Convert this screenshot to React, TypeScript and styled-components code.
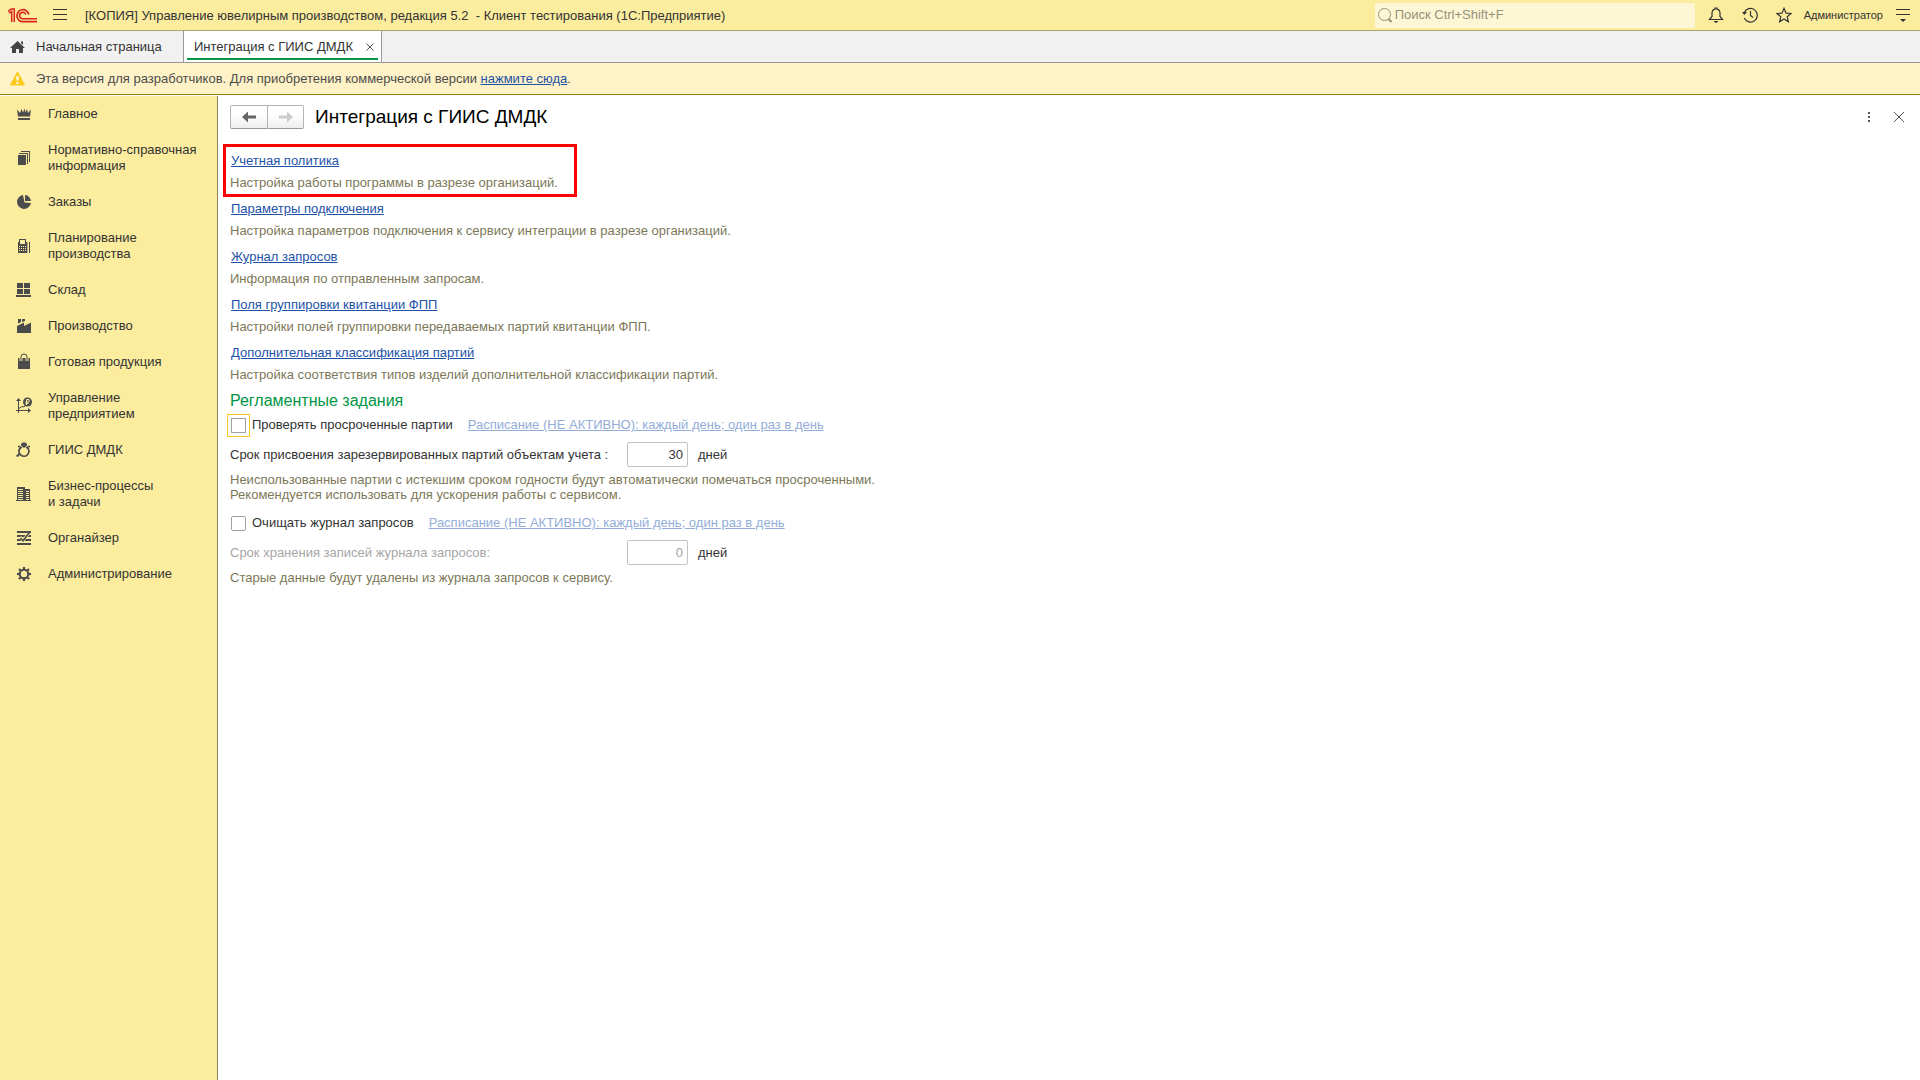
import React from 'react';
import styled, { createGlobalStyle, css } from 'styled-components';

const GlobalStyle = createGlobalStyle`
  *, *::before, *::after { box-sizing: border-box; }
  body { margin: 0; background: #fff; }
  body, button, input {
    font-family: "Liberation Sans", Arial, sans-serif;
    font-size: 13px;
    line-height: 16px;
    color: #333;
  }
`;

const Page = styled.div`
  display: flex;
  flex-direction: column;
  min-height: 100vh;
`;

const iconButton = css`
  display: flex;
  align-items: center;
  justify-content: center;
  padding: 0;
  border: 0;
  background: none;
  color: #333;
  cursor: pointer;
`;

const TitleBar = styled.header`
  display: flex;
  align-items: center;
  height: 31px;
  padding: 0 8px;
  background: #fbec9e;
  border-bottom: 1px solid #aaa46e;
`;

const MenuButton = styled.button`
  ${iconButton}
  width: 14px;
  height: 24px;
  margin: 0 18px 0 16px;
`;

const AppTitle = styled.span`
  flex: 1;
  padding-top: 2px;
  white-space: pre;
`;

const SearchBox = styled.label`
  display: flex;
  align-items: center;
  gap: 2px;
  width: 320px;
  height: 25px;
  padding: 0 2px;
  margin-right: 4px;
  border-radius: 2px;
  background: #fdf7d5;
  color: #98917a;
`;

const SearchInput = styled.input`
  flex: 1;
  min-width: 0;
  padding: 0;
  border: 0;
  outline: 0;
  background: none;
  &::placeholder { color: #98917a; opacity: 1; }
`;

const ToolButton = styled.button`
  ${iconButton}
  width: 34px;
  height: 30px;
`;

const UserName = styled.button`
  ${iconButton}
  padding: 0 3px;
  font-size: 11px;
`;

const LastTool = styled.button`
  ${iconButton}
  width: 18px;
  height: 30px;
  margin-left: 8px;
`;

const TabBar = styled.nav`
  display: flex;
  height: 32px;
  background: #f1f1f1;
  border-bottom: 1px solid #999;
`;

const HomeTab = styled.button`
  display: flex;
  align-items: center;
  gap: 11px;
  width: 183px;
  padding: 0 10px;
  border: 0;
  background: none;
  white-space: nowrap;
`;

const ActiveTab = styled.div`
  display: flex;
  align-items: center;
  justify-content: space-between;
  min-width: 199px;
  padding: 0 6px 0 10px;
  background: #fff linear-gradient(#009646, #009646) no-repeat 3px 27px / calc(100% - 6px) 2px;
  border: solid #999;
  border-width: 0 1px;
  white-space: nowrap;
`;

const CloseTab = styled.button`
  ${iconButton}
  width: 10px;
  height: 16px;
`;

const Notice = styled.div`
  display: flex;
  align-items: center;
  gap: 11px;
  height: 32px;
  padding: 0 10px;
  background: #fef2c6;
  border-bottom: 1px solid #947c1c;
  color: #4d4d4d;
`;

const Link = styled.a<{ $muted?: boolean }>`
  color: ${p => (p.$muted ? '#93add8' : '#1d52a8')};
  text-decoration: underline;
`;

const Body = styled.div`
  display: flex;
  flex: 1;
`;

const Sidebar = styled.nav`
  width: 218px;
  margin-top: 1px;
  flex-shrink: 0;
  background: #fbec9e;
  border-right: 1px solid #8f8757;
`;

const NavItem = styled.button`
  display: flex;
  align-items: center;
  gap: 16px;
  width: 100%;
  padding: 11px 0 9px 16px;
  border: 0;
  background: none;
  text-align: left;
  white-space: pre-line;
  cursor: pointer;
  &:first-child { padding-top: 10px; }
  svg {
    flex-shrink: 0;
    margin-top: -2px;
    color: #4b4b4b;
  }
`;

const Main = styled.main`
  flex: 1;
  min-width: 0;
  padding: 10px 12px;
`;

const FormHeader = styled.div`
  display: flex;
  align-items: center;
  height: 24px;
  margin-bottom: 20px;
`;

const History = styled.div`
  display: flex;
  height: 24px;
`;

const HistoryButton = styled.button<{ $side: 'left' | 'right' }>`
  ${iconButton}
  width: ${p => (p.$side === 'left' ? 38 : 36)}px;
  border: 1px solid #b4b4b4;
  border-left-width: ${p => (p.$side === 'left' ? 1 : 0)}px;
  border-bottom-color: #999;
  border-radius: ${p => (p.$side === 'left' ? '2px 0 0 2px' : '0 2px 2px 0')};
  background: linear-gradient(#fff 40%, #eee);
  color: ${p => (p.$side === 'left' ? '#666' : '#ccc')};
`;

const FormTitle = styled.h1`
  flex: 1;
  margin: 0 0 0 11px;
  font-size: 19px;
  line-height: 24px;
  font-weight: 400;
  color: #000;
`;

const FormTool = styled.button`
  ${iconButton}
  width: 30px;
  height: 24px;
  color: #555;
  &:last-child { margin-right: -6px; }
`;

const Entry = styled.section<{ $marked?: boolean }>`
  position: relative;
  width: fit-content;
  padding-bottom: 4px;
  ${p => p.$marked && css`
    &::after {
      content: "";
      position: absolute;
      inset: -5px -19px 0 -7px;
      border: 3px solid #f00;
      pointer-events: none;
    }
  `}
`;

const EntryLink = styled.div`
  padding-left: 1px;
  line-height: 24px;
`;

const Hint = styled.p`
  margin: 0;
  line-height: 20px;
  color: #7c7857;
`;

const LongHint = styled(Hint)`
  line-height: 15px;
  margin: 5px 0 9px;
`;

const GroupTitle = styled.h2`
  margin: 0;
  font-size: 16px;
  line-height: 24px;
  font-weight: 400;
  color: #009646;
`;

const CheckRow = styled.div`
  display: flex;
  align-items: center;
  gap: 15px;
  height: 24px;
`;

const CheckLabel = styled.label`
  display: flex;
  align-items: center;
  gap: 6px;
  padding-left: 1px;
`;

const Checkbox = styled.input<{ $focused?: boolean }>`
  appearance: none;
  width: 15px;
  height: 15px;
  margin: 0;
  border: 1px solid #a0a0a0;
  border-radius: ${p => (p.$focused ? 0 : 2)}px;
  background: #fff;
  outline: ${p => (p.$focused ? '1px solid #f5c924' : '0')};
  outline-offset: 3px;
  &:checked { background: #666; }
`;

const FieldRow = styled.div`
  display: flex;
  align-items: center;
  height: 25px;
  margin-top: 5px;
`;

const FieldLabel = styled.label<{ $muted?: boolean }>`
  width: 397px;
  color: ${p => (p.$muted ? '#a6a6a6' : '#333')};
`;

const NumberInput = styled.input`
  width: 61px;
  height: 25px;
  margin-right: 10px;
  padding: 0 4px;
  border: 1px solid #c3c3c3;
  border-radius: 2px;
  background: #fff;
  text-align: right;
  &:disabled { color: #a0a0a0; }
`;

const ico = { width: 16, height: 16, viewBox: '0 0 16 16', fill: 'currentColor', 'aria-hidden': true } as const;
const line = { ...ico, fill: 'none', stroke: 'currentColor' } as const;

const Crown = () => <svg {...ico}><path d="M1 4.500L4 8l1.500-4L7 7.500l1.500-4L9.500 7.500 11 4l1 4 3-3.500-1 7H2zM2 13h12v2H2z" /></svg>;
const Docs = () => <svg {...ico}><path d="M2 6h8v10H2zM3 4h9v11h-1V5H3zM5 2h9v11h-1V3H5z" /></svg>;
const Pie = () => <svg {...ico}><path d="M7 2a7 7 0 1 0 8 8L8.500 9.500zM9 2a6.500 6.500 0 0 1 6 6H9z" /></svg>;
const Calc = () => (
  <svg {...ico} shapeRendering="crispEdges">
    <path fillRule="evenodd" d="M3 2h7v3h1v11H2V5h1zM4 3v4h5V3zM3 9v1h1V9zM5 9v1h1V9zM7 9v1h1V9zM9 9v1h1V9zM3 11v1h1v-1zM5 11v1h1v-1zM7 11v1h1v-1zM9 11v1h1v-1zM3 13v1h1v-1zM5 13v1h1v-1zM7 13v1h1v-1zM9 13v1h1v-1zM13 5h1v11h-1z" />
    <path d="M11 5h1v11h-1z" opacity=".35" />
  </svg>
);
const Boxes = () => <svg {...ico}><path d="M1 2h6v5H1zM8 2h6v5H8zM1 8h6v5H1zM8 8h6v5H8zM0 14h15v2H0z" /></svg>;
const Factory = () => <svg {...ico}><path d="M2 2h3v3L2 6.500zM6 2h3v2L6 5zM1 9l7-3.500V9l7-3.500V16H1z" /></svg>;
const Bag = () => <svg {...ico}><path d="M2 5h12v11H2z" /><path d="M5 8V4a3 3 0 0 1 6 0v4" fill="none" stroke="#fbec9e" strokeWidth="3" /><path d="M5 8V4a3 3 0 0 1 6 0v4" fill="none" stroke="currentColor" /></svg>;
const Graph = () => (
  <svg {...ico}>
    <path d="M0 4l2.500-3L5 4H3v9h9v-2l3 2.500-3 2.500v-2H3v2H2v-2H0v-1h2V4z" />
    <path d="M3 11.500l3-2 2 .5 2-2" fill="none" stroke="currentColor" />
    <circle cx="11.500" cy="5" r="4.500" />
    <path d="M10.500 8V2.500h2.500v2.500h-3.500M9.500 6.500h3" fill="none" stroke="#fbec9e" />
  </svg>
);
const Ring = () => (
  <svg {...ico}>
    <path d="M5 3l1.500-1.500h3L11 3v1.500L8 7 5 4.500z" />
    <path d="M2 5.500h1.500L5 6.500C2 8.500 2.500 12.500 5 14.200c2 1.200 5 1.200 6.500-.5 2-2 2-5.500-.5-7.200l1.500-1H14" fill="none" stroke="currentColor" strokeWidth="1.700" />
    <path d="M4 12.500L.7 15.500" stroke="currentColor" strokeWidth="2" />
  </svg>
);
const Buildings = () => <svg {...ico} shapeRendering="crispEdges"><path fillRule="evenodd" d="M1 2h8v2h5v11h1v1H0v-1h1zM2 4v1h5V4zM2 6v1h5V6zM2 8v1h5V8zM2 10v1h5v-1zM2 12v1h5v-1zM2 14v1h5v-1zM10 6v1h3V6zM10 8v1h3V8zM10 10v1h3v-1zM10 12v1h3v-1zM10 14v1h3v-1z" /></svg>;
const Lists = () => (
  <svg {...ico}>
    <path d="M1 6h14v2H1zM1 10h14v2H1z" />
    <path d="M4 8l3 3.500L14 3" fill="none" stroke="#fbec9e" strokeWidth="3" />
    <path d="M4.500 9L7 11.800 13.500 3.500" fill="none" stroke="currentColor" strokeWidth="1.700" />
    <path d="M1 2h14v2H1zM1 14h14v2H1z" />
  </svg>
);
const Gear = () => (
  <svg {...line}>
    <circle cx="8" cy="9" r="4.200" strokeWidth="2" />
    <g strokeWidth="2.200">
      {[0, 45, 90, 135, 180, 225, 270, 315].map(a => <path key={a} d="M8 4.500V2" transform={`rotate(${a} 8 9)`} />)}
    </g>
  </svg>
);

const Logo = () => (
  <svg width="29" height="15" viewBox="0 0 29 15" fill="none" stroke="#d9251c" aria-label="1С" role="img">
    <path d="M0 3.500L3.200 1H6.300v13M3.700 14V3.500L1 5" strokeWidth="1.500" />
    <path d="M20.800 6.500a6 6 0 1 0-6 7.200H29" strokeWidth="1.700" />
    <path d="M17.800 6.500a3.200 3.200 0 1 0-3 4.300H29" strokeWidth="1.500" />
  </svg>
);

const sections: { label: string; Icon: React.FC }[] = [
  { label: 'Главное', Icon: Crown },
  { label: 'Нормативно-справочная\nинформация', Icon: Docs },
  { label: 'Заказы', Icon: Pie },
  { label: 'Планирование\nпроизводства', Icon: Calc },
  { label: 'Склад', Icon: Boxes },
  { label: 'Производство', Icon: Factory },
  { label: 'Готовая продукция', Icon: Bag },
  { label: 'Управление\nпредприятием', Icon: Graph },
  { label: 'ГИИС ДМДК', Icon: Ring },
  { label: 'Бизнес-процессы\nи задачи', Icon: Buildings },
  { label: 'Органайзер', Icon: Lists },
  { label: 'Администрирование', Icon: Gear },
];

const entries = [
  { title: 'Учетная политика', hint: 'Настройка работы программы в разрезе организаций.', marked: true },
  { title: 'Параметры подключения', hint: 'Настройка параметров подключения к сервису интеграции в разрезе организаций.' },
  { title: 'Журнал запросов', hint: 'Информация по отправленным запросам.' },
  { title: 'Поля группировки квитанции ФПП', hint: 'Настройки полей группировки передаваемых партий квитанции ФПП.' },
  { title: 'Дополнительная классификация партий', hint: 'Настройка соответствия типов изделий дополнительной классификации партий.' },
];

const schedule = 'Расписание (НЕ АКТИВНО): каждый день; один раз в день';

export default function App() {
  return (
    <Page>
      <GlobalStyle />
      <TitleBar>
        <Logo />
        <MenuButton aria-label="Меню">
          <svg width="14" height="12" viewBox="0 0 14 12" stroke="currentColor"><path d="M0 .5h14M0 5.500h14M0 10.500h14" /></svg>
        </MenuButton>
        <AppTitle>{'[КОПИЯ] Управление ювелирным производством, редакция 5.2  - Клиент тестирования (1С:Предприятие)'}</AppTitle>
        <SearchBox>
          <svg {...line}><circle cx="7.500" cy="7.500" r="6" /><path d="M11.500 12l3 3" strokeWidth="2.200" /></svg>
          <SearchInput aria-label="Поиск" placeholder="Поиск Ctrl+Shift+F" />
        </SearchBox>
        <ToolButton aria-label="Уведомления">
          <svg {...line}><path d="M1.500 12.500h13L12 9.500V6.500C12 4 10.500 2.500 9 2.200V1H7v1.200C5.500 2.500 4 4 4 6.500v3z" strokeWidth="1.200" /><path d="M5.500 14h5L8 16.200z" fill="currentColor" stroke="none" /></svg>
        </ToolButton>
        <ToolButton aria-label="История">
          <svg {...line}><path d="M2.300 5.500A6.800 6.800 0 1 1 2.300 11M8.500 4v4.500l2.500 2" strokeWidth="1.200" /><path d="M0 5h5L2.300 8z" fill="currentColor" stroke="none" /></svg>
        </ToolButton>
        <ToolButton aria-label="Избранное">
          <svg {...line}><path d="M8 1.300l2 4.900 5 .3-3.800 3.300 1.200 5L8 12l-4.400 2.800 1.200-5L1 6.500l5-.3z" strokeWidth="1.200" /></svg>
        </ToolButton>
        <UserName>Администратор</UserName>
        <LastTool aria-label="Настройки">
          <svg width="14" height="14" viewBox="0 0 14 14" stroke="currentColor"><path d="M0 1.500h14M0 6.500h14" /><path d="M4 11h6l-3 3z" fill="currentColor" stroke="none" /></svg>
        </LastTool>
      </TitleBar>
      <TabBar>
        <HomeTab>
          <svg width="15" height="14" viewBox="0 0 15 14" fill="#444"><path d="M7.500 1L15 8h-2v5H9V9H6v4H2V8H0zM11 1.500h2V5l-2-2z" /></svg>
          Начальная страница
        </HomeTab>
        <ActiveTab>
          Интеграция с ГИИС ДМДК
          <CloseTab aria-label="Закрыть вкладку">
            <svg width="8" height="8" viewBox="0 0 8 8" stroke="#555"><path d="M.5 .5l7 7M7.500 .5l-7 7" /></svg>
          </CloseTab>
        </ActiveTab>
      </TabBar>
      <Notice>
        <svg width="15" height="15" viewBox="0 0 15 15"><path d="M7.500 1L14.500 14H.5z" fill="#fbc91c" stroke="#fbc91c" strokeLinejoin="round" /><path d="M7.500 5v4.500M7.500 11v2" stroke="#fff" strokeWidth="2" /></svg>
        <span>Эта версия для разработчиков. Для приобретения коммерческой версии <Link href="#buy">нажмите сюда</Link>.</span>
      </Notice>
      <Body>
        <Sidebar>
          {sections.map(({ label, Icon }) => (
            <NavItem key={label}><Icon /><span>{label}</span></NavItem>
          ))}
        </Sidebar>
        <Main>
          <FormHeader>
            <History>
              <HistoryButton $side="left" aria-label="Назад">
                <svg width="14" height="12" viewBox="0 0 14 12" fill="currentColor"><path d="M0 6l6-5.500V4.500h8v3H6v4z" /></svg>
              </HistoryButton>
              <HistoryButton $side="right" aria-label="Вперед">
                <svg width="14" height="12" viewBox="0 0 14 12" fill="currentColor"><path d="M14 6L8 .5V4.500H0v3h8v4z" /></svg>
              </HistoryButton>
            </History>
            <FormTitle>Интеграция с ГИИС ДМДК</FormTitle>
            <FormTool aria-label="Еще">
              <svg width="2" height="12" viewBox="0 0 2 12" fill="currentColor"><path d="M0 1h2v2H0zM0 5h2v2H0zM0 9h2v2H0z" /></svg>
            </FormTool>
            <FormTool aria-label="Закрыть">
              <svg width="10" height="10" viewBox="0 0 10 10" stroke="currentColor"><path d="M0 0l10 10M10 0L0 10" /></svg>
            </FormTool>
          </FormHeader>
          {entries.map(e => (
            <Entry key={e.title} $marked={e.marked}>
              <EntryLink><Link href="#open">{e.title}</Link></EntryLink>
              <Hint>{e.hint}</Hint>
            </Entry>
          ))}
          <GroupTitle>Регламентные задания</GroupTitle>
          <CheckRow>
            <CheckLabel><Checkbox type="checkbox" $focused />Проверять просроченные партии</CheckLabel>
            <Link $muted href="#schedule">{schedule}</Link>
          </CheckRow>
          <FieldRow>
            <FieldLabel htmlFor="reserve">Срок присвоения зарезервированных партий объектам учета :</FieldLabel>
            <NumberInput id="reserve" defaultValue="30" />
            дней
          </FieldRow>
          <LongHint>
            Неиспользованные партии с истекшим сроком годности будут автоматически помечаться просроченными.<br />
            Рекомендуется использовать для ускорения работы с сервисом.
          </LongHint>
          <CheckRow>
            <CheckLabel><Checkbox type="checkbox" />Очищать журнал запросов</CheckLabel>
            <Link $muted href="#schedule">{schedule}</Link>
          </CheckRow>
          <FieldRow>
            <FieldLabel $muted htmlFor="storage">Срок хранения записей журнала запросов:</FieldLabel>
            <NumberInput id="storage" defaultValue="0" disabled />
            дней
          </FieldRow>
          <LongHint>Старые данные будут удалены из журнала запросов к сервису.</LongHint>
        </Main>
      </Body>
    </Page>
  );
}
